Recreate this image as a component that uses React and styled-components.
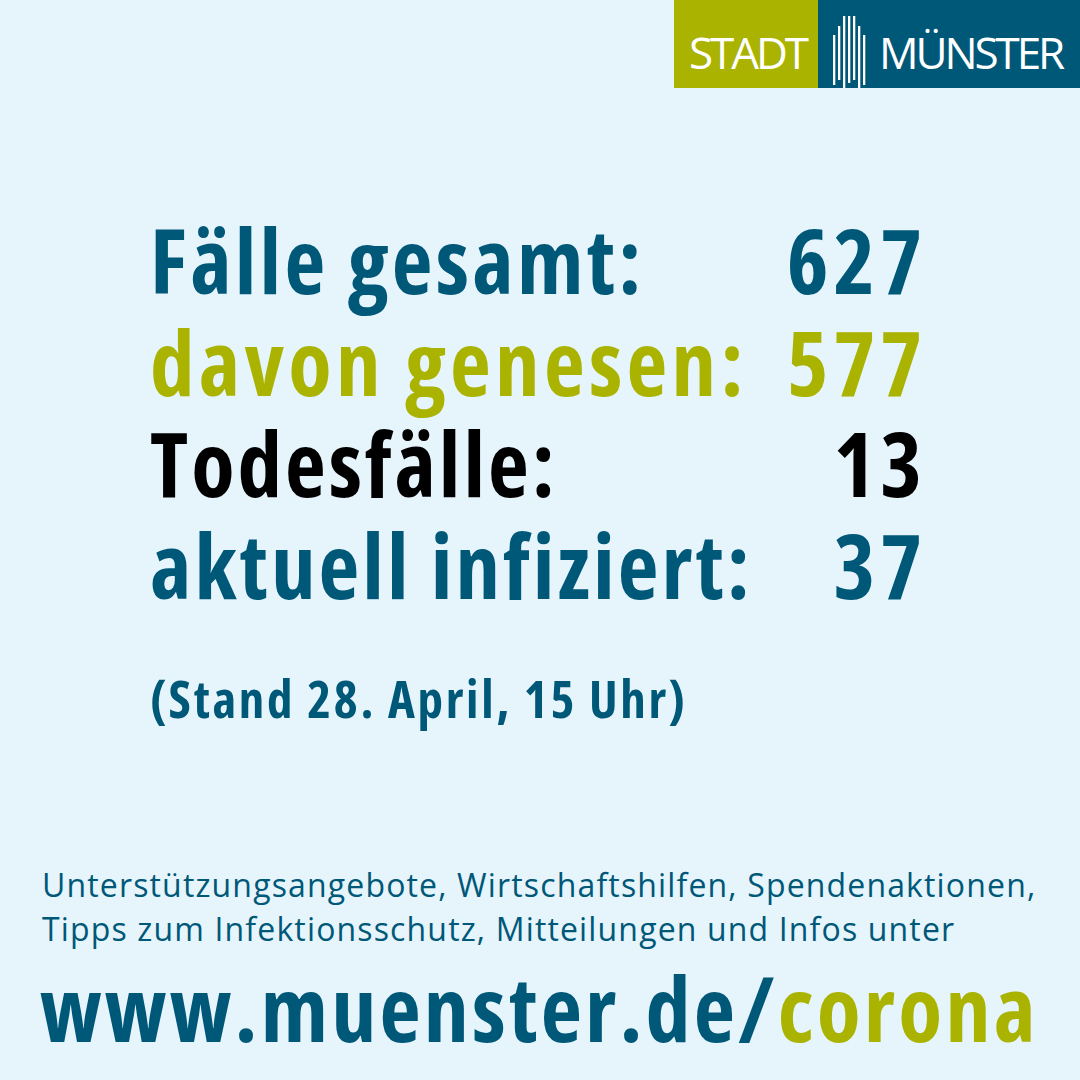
import React from "react";
import styled, { createGlobalStyle } from "styled-components";

const Global = createGlobalStyle`
  html, body { margin: 0; padding: 0; background: #e6f4fc; }
  body { font-family: "Open Sans", "Liberation Sans", sans-serif; }
`;

const Page = styled.div`
  width: 1080px;
  height: 1080px;
  background: #e6f4fc;
  display: flex;
  flex-direction: column;
  overflow: hidden;
`;

const Header = styled.div`
  display: flex;
  justify-content: flex-end;
`;

const LogoPart = styled.div`
  width: ${(p) => p.$w}px;
  height: 88px;
  background: ${(p) => p.$bg};
  display: flex;
  align-items: center;
  gap: 13px;
  padding-left: ${(p) => p.$pl}px;
  box-sizing: border-box;
`;

const LogoText = styled.span`
  margin-top: 16px;
  color: #fff;
  font-size: 44px;
  line-height: 44px;
  letter-spacing: -3.1px;
`;

const Stats = styled.div`
  margin: 121px 0 0 150px;
  width: 772px;
  display: grid;
  grid-template-columns: 1fr auto;
  grid-auto-rows: 101.5px;
  align-items: center;
  font-weight: 700;
  font-size: 89px;
  font-stretch: 75%;
  line-height: 1;
`;

const Label = styled.div`
  color: ${(p) => p.$c};
  letter-spacing: ${(p) => p.$ls}px;
`;

const Value = styled.div`
  color: ${(p) => p.$c};
  text-align: right;
  letter-spacing: 5px;
  margin-right: -5px;
`;

const Stand = styled.div`
  margin: 48px 0 0 150px;
  color: #005878;
  font-weight: 700;
  font-size: 51px;
  font-stretch: 75%;
  letter-spacing: 2.7px;
`;

const Info = styled.div`
  margin: 130px 0 0 42px;
  color: #005878;
  font-size: 32px;
  line-height: 44px;
  letter-spacing: 1.15px;
  white-space: nowrap;
`;

const Url = styled.div`
  margin: 6px 0 0 40px;
  color: #005878;
  font-size: 90px;
  font-weight: 700;
  font-stretch: 75%;
  line-height: 100px;
  letter-spacing: 3.2px;
  white-space: nowrap;
`;

const Green = styled.span`
  color: #a9b300;
`;

const bars = [
  [0, 25, 75],
  [5, 16, 70],
  [10, 6, 80],
  [15, 6, 73],
  [20, 6, 70],
  [25, 16, 78],
  [30, 25, 75],
];

function Bars() {
  return (
    <svg width="33" height="88" viewBox="0 0 33 88">
      <g transform="translate(0 10)">
        {bars.map(([x, y1, y2], i) => (
          <rect key={i} x={x} y={y1} width="2.3" height={y2 - y1} fill="#fff" />
        ))}
      </g>
    </svg>
  );
}

const rows = [
  ["Fälle gesamt:", "627", "#005878", 3.3],
  ["davon genesen:", "577", "#a9b300", 4.3],
  ["Todesfälle:", "13", "#000", 3],
  ["aktuell infiziert:", "37", "#005878", 3.1],
];

export default function App() {
  return (
    <Page>
      <Global />
      <Header>
        <LogoPart $bg="#a9b300" $w={144} $pl={15}>
          <LogoText>STADT</LogoText>
        </LogoPart>
        <LogoPart $bg="#005878" $w={262} $pl={15}>
          <Bars />
          <LogoText>MÜNSTER</LogoText>
        </LogoPart>
      </Header>
      <Stats>
        {rows.map(([l, v, c, ls]) => (
          <React.Fragment key={l}>
            <Label $c={c} $ls={ls}>{l}</Label>
            <Value $c={c}>{v}</Value>
          </React.Fragment>
        ))}
      </Stats>
      <Stand>(Stand 28. April, 15 Uhr)</Stand>
      <Info>
        Unterstützungsangebote, Wirtschaftshilfen, Spendenaktionen,
        <br />
        Tipps zum Infektionsschutz, Mitteilungen und Infos unter
      </Info>
      <Url>
        www.muenster.de/<Green>corona</Green>
      </Url>
    </Page>
  );
}
